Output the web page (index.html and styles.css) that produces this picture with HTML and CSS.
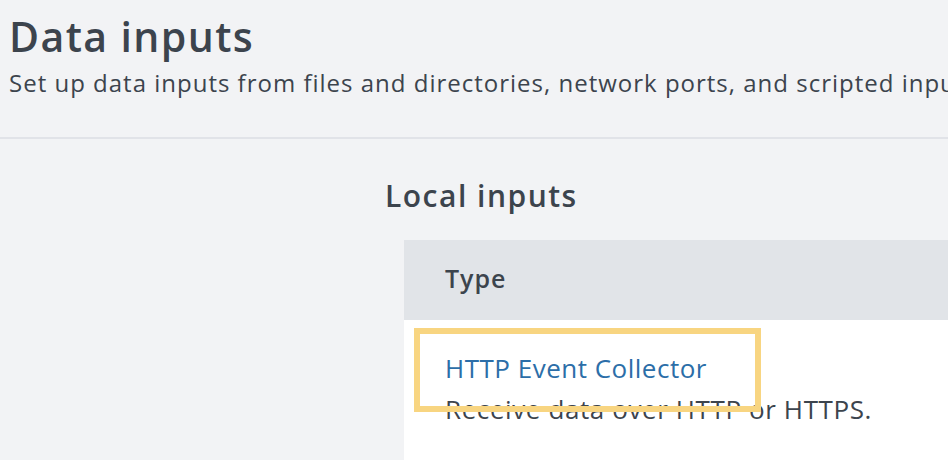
FILE: index.html
```html
<!DOCTYPE html>
<html>
<head>
<meta charset="utf-8">
<link rel="stylesheet" href="styles.css">
</head>
<body>
<header class="page-header">
  <h1 class="page-title">Data inputs</h1>
  <p class="page-desc">Set up data inputs from files and directories, network ports, and scripted inputs. If you want to set up forwarding and receiving between two Splunk instances, go to Forwarding and receiving.</p>
</header>
<main class="content">
  <h2 class="section-title">Local inputs</h2>
  <div class="table">
    <div class="table-head">Type</div>
    <div class="table-row">
      <a class="row-link" href="#">HTTP Event Collector</a>
      <div class="row-desc">Receive data over HTTP or HTTPS.</div>
      <div class="highlight"></div>
    </div>
  </div>
</main>
</body>
</html>
```
FILE: styles.css
```css
html, body {
  margin: 0;
  padding: 0;
  background: #f2f3f5;
  overflow: hidden;
  height: 460px;
}
body {
  font-family: "Open Sans", Lato, sans-serif;
  color: #3c444d;
}
.page-header {
  padding: 11px 0 0 9px;
  height: 126px;
  border-bottom: 2px solid #e1e3e8;
  white-space: nowrap;
  overflow: hidden;
}
.page-title {
  margin: 0;
  font-size: 41px;
  font-weight: 600;
  letter-spacing: 1.4px;
  line-height: 50px;
  color: #3c444d;
}
.page-desc {
  margin: 4px 0 0 0;
  font-size: 24px;
  letter-spacing: 1px;
  line-height: 36px;
  color: #3c444d;
}
.content {
  padding: 37px 0 0 385px;
}
.section-title {
  margin: 0 0 24px 0;
  font-size: 30px;
  font-weight: 600;
  letter-spacing: 1.5px;
  line-height: 40px;
  color: #3c444d;
}
.table {
  margin-left: 19px;
  background: #fff;
  height: 220px;
  overflow: hidden;
}
.table-head {
  background: #e1e4e8;
  height: 80px;
  box-sizing: border-box;
  padding: 23px 0 0 41px;
  font-size: 25px;
  font-weight: 600;
  letter-spacing: 1px;
  line-height: 30px;
}
.table-row {
  position: relative;
  padding: 31px 0 20px 41px;
}
.row-link {
  display: block;
  color: #2c6ea8;
  text-decoration: none;
  font-size: 26px;
  letter-spacing: 0.5px;
  line-height: 34px;
}
.row-desc {
  font-size: 26px;
  letter-spacing: 0.6px;
  line-height: 34px;
  margin-top: 7px;
}
.highlight {
  position: absolute;
  left: 10px;
  top: 8px;
  width: 335px;
  height: 72px;
  border: 6px solid #f8d581;
}
```
